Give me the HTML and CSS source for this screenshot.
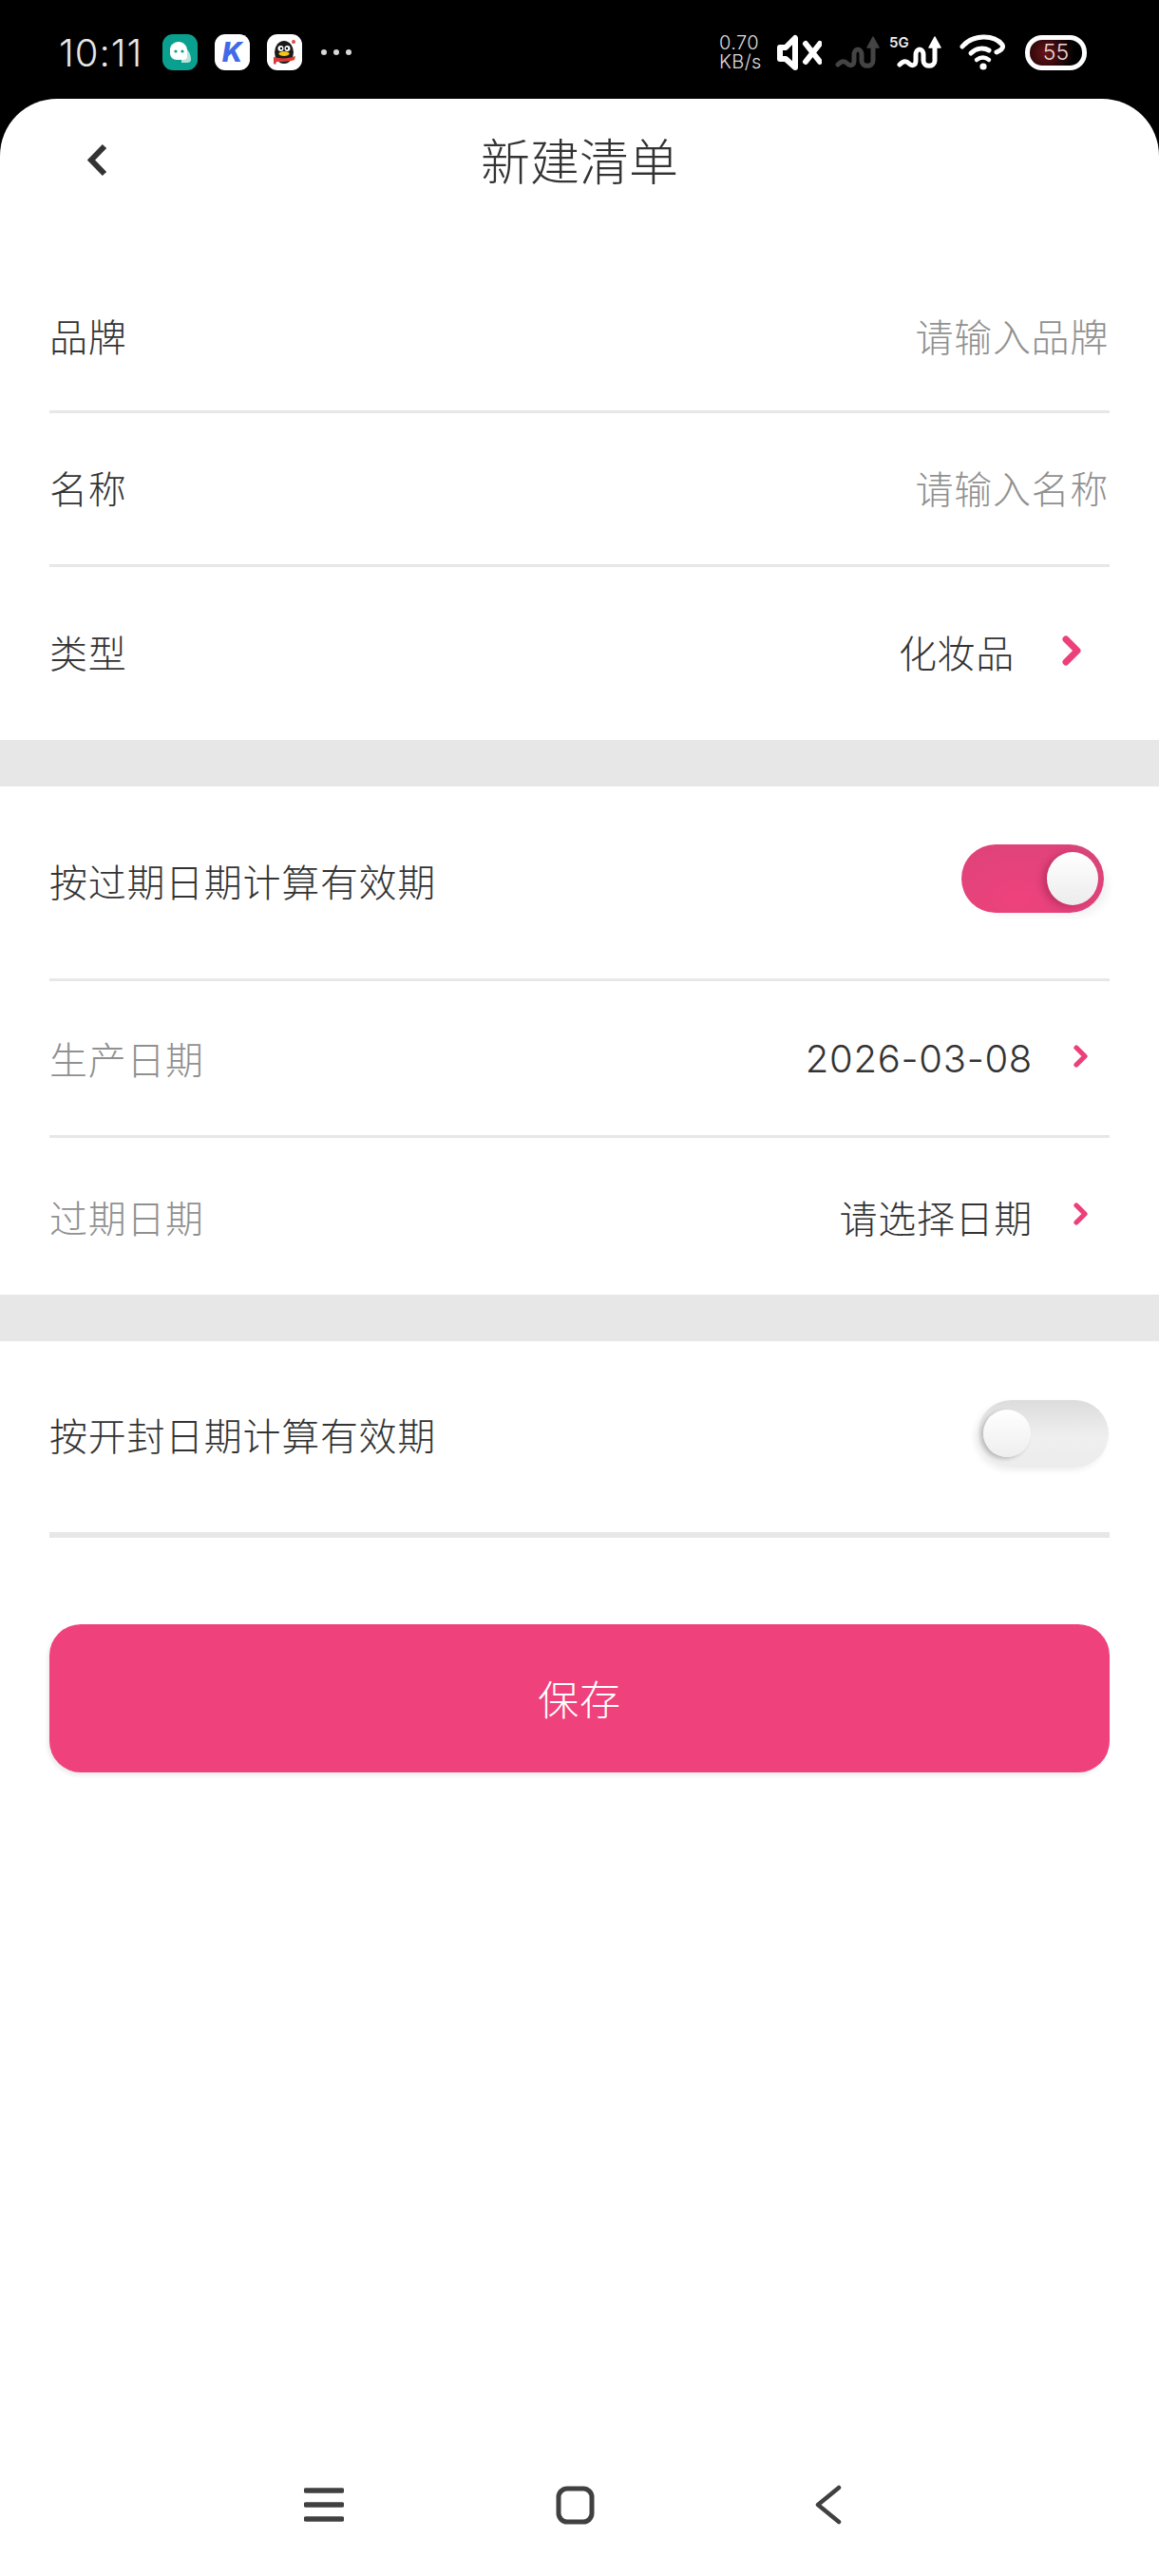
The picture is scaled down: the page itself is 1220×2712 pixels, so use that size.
FILE: index.html
```html
<!DOCTYPE HTML>
<html>
<head>
  <meta charset="UTF-8">
  <title>新建清单</title>
  <meta name="viewport" content="width=device-width, initial-scale=1">
  <link rel="stylesheet" href="styles.css">
</head>
<body>
  <svg class="defs" width="0" height="0">
    <symbol id="signal" viewBox="0 0 47 35">
      <path d="M3 30C7 26 10 26 13 29C16 32 20 31 20 26V20C20 12 28 12 28 20V26C28 33 40 33 40 26V10" fill="none" stroke="currentColor" stroke-width="5" stroke-linecap="round"/>
      <path d="M40 1L46 12H34Z" fill="currentColor" stroke="currentColor" stroke-width="1.5" stroke-linejoin="round"/>
    </symbol>
    <symbol id="arrow" viewBox="0 0 20 32">
      <path d="M4 4L16 16L4 28" fill="none" stroke="currentColor" stroke-width="7" stroke-linecap="round" stroke-linejoin="round"/>
    </symbol>
  </svg>

  <div class="statusbar">
    <span class="time">10:11</span>
    <div class="notify">
      <svg class="app" width="37" height="38" viewBox="0 0 37 38">
        <rect width="37" height="38" rx="11" fill="#0aa08f"/>
        <path d="M20 13C26 14 30 20 30 27C30 29 28 30 26 30H20Z" fill="#b5e3dc"/>
        <path d="M8 16C8 11 13 8 17 8C22 8 26 12 26 17V24C26 26 24 27 22 27H15C11 27 8 24 8 20Z" fill="#fff"/>
        <circle cx="14" cy="18" r="1.6" fill="#0aa08f"/>
        <circle cx="21" cy="18" r="1.6" fill="#0aa08f"/>
      </svg>
      <span class="app app-k">K</span>
      <svg class="app" width="37" height="38" viewBox="0 0 37 38">
        <rect width="37" height="38" rx="11" fill="#fff"/>
        <ellipse cx="18" cy="19" rx="10" ry="12" fill="#1a1a1a"/>
        <circle cx="14.5" cy="15" r="3" fill="#fff"/>
        <circle cx="21.5" cy="15" r="3" fill="#fff"/>
        <circle cx="15" cy="15" r="1.2" fill="#111"/>
        <circle cx="21" cy="15" r="1.2" fill="#111"/>
        <ellipse cx="18" cy="20.5" rx="5.5" ry="2.6" fill="#f5c518"/>
        <path d="M7 24C14 26 23 26 30 23L29 27C23 29 15 29 10 29L9 32L7 31Z" fill="#dd3a35"/>
        <circle cx="28" cy="8" r="2" fill="#e2483f"/>
      </svg>
      <div class="dots"><i></i><i></i><i></i></div>
    </div>
    <div class="sys">
      <div class="speed"><span>0.70</span><span>KB/s</span></div>
      <svg class="mute" width="47" height="39" viewBox="0 0 47 39">
        <path d="M3 14H9L19 4V35L9 26H3Z" fill="none" stroke="#fff" stroke-width="6" stroke-linejoin="round"/>
        <path d="M30 10L45 29M45 10L30 29" stroke="#fff" stroke-width="6" stroke-linecap="round"/>
      </svg>
      <svg class="signal signal-off" width="47" height="35"><use href="#signal"/></svg>
      <span class="net">5G</span>
      <svg class="signal signal-on" width="47" height="35"><use href="#signal"/></svg>
      <svg class="wifi" width="49" height="38" viewBox="0 0 49 38">
        <path d="M3 13C14 0 36 0 45 11C47 15 43 17 39 19" fill="none" stroke="#fff" stroke-width="5" stroke-linecap="round"/>
        <path d="M12 20C18 14 26 14 31 17" fill="none" stroke="#fff" stroke-width="5" stroke-linecap="round"/>
        <path d="M18 27C22 24 27 24 31 27" fill="none" stroke="#fff" stroke-width="4.5" stroke-linecap="round"/>
        <circle cx="25" cy="34" r="3.6" fill="#fff"/>
      </svg>
      <div class="battery"><span>55</span></div>
    </div>
  </div>

  <div class="sheet">
    <div class="topbar">
      <svg class="back" width="21" height="35" viewBox="0 0 21 35">
        <path d="M18 3L4 17.5L18 32" fill="none" stroke="#333" stroke-width="6"/>
      </svg>
      <h1>新建清单</h1>
    </div>

    <div class="group group-first">
      <div class="row row-brand">
        <span>品牌</span>
        <span class="hint">请输入品牌</span>
      </div>
      <div class="row row-name">
        <span>名称</span>
        <span class="hint">请输入名称</span>
      </div>
      <div class="row row-type">
        <span>类型</span>
        <div class="pick">
          <span>化妆品</span>
          <svg class="go go-big" width="20" height="32"><use href="#arrow"/></svg>
        </div>
      </div>
    </div>

    <div class="group">
      <div class="row row-switch">
        <span>按过期日期计算有效期</span>
        <div class="switch on"><i></i></div>
      </div>
      <div class="row row-date">
        <span class="muted">生产日期</span>
        <div class="pick">
          <span class="date">2026-03-08</span>
          <svg class="go" width="15" height="24"><use href="#arrow"/></svg>
        </div>
      </div>
      <div class="row row-date row-last">
        <span class="muted">过期日期</span>
        <div class="pick">
          <span>请选择日期</span>
          <svg class="go" width="15" height="24"><use href="#arrow"/></svg>
        </div>
      </div>
    </div>

    <div class="group group-end">
      <div class="row row-switch row-thick">
        <span>按开封日期计算有效期</span>
        <div class="switch off"><i></i></div>
      </div>
    </div>

    <div class="save">保存</div>

    <div class="navbar">
      <svg width="42" height="36" viewBox="0 0 42 36">
        <path d="M2 3H40M2 18H40M2 33H40" stroke="#404040" stroke-width="5.5" stroke-linecap="round"/>
      </svg>
      <svg width="41" height="41" viewBox="0 0 41 41">
        <rect x="3" y="3" width="35" height="35" rx="9" fill="none" stroke="#404040" stroke-width="5"/>
      </svg>
      <svg width="30" height="42" viewBox="0 0 30 42">
        <path d="M27 3L5 21L27 39" fill="none" stroke="#404040" stroke-width="4.5" stroke-linecap="round" stroke-linejoin="round"/>
      </svg>
    </div>
  </div>
</body>
</html>
```

FILE: styles.css
```css
* { box-sizing: border-box; }
html, body { margin: 0; padding: 0; }
body {
  width: 1220px;
  height: 2712px;
  background: #000;
  color: #333;
  font-family: "Noto Sans CJK SC", "Noto Sans", sans-serif;
  font-weight: 300;
  font-size: 40px;
  letter-spacing: 0.7px;
  display: flex;
  flex-direction: column;
  overflow: hidden;
}
.defs { display: block; height: 0; }

/* status bar */
.statusbar {
  height: 104px;
  flex: none;
  display: flex;
  align-items: center;
  padding: 6px 0 0 62px;
  color: #e6e6e6;
}
.time { font-family: Inter, sans-serif; font-weight: 300; font-size: 40px; width: 109px; letter-spacing: 1px; }
.notify { display: flex; align-items: center; gap: 18px; }
.app { display: block; flex: none; }
.app-k {
  width: 37px;
  height: 38px;
  border-radius: 11px;
  background: #fff;
  color: #4169e8;
  font-family: Inter, sans-serif;
  font-style: italic;
  font-weight: 800;
  font-size: 29px;
  line-height: 38px;
  letter-spacing: 0;
  text-align: center;
}
.dots { display: flex; gap: 7px; margin-left: 2px; }
.dots i { width: 6px; height: 6px; border-radius: 50%; background: #d8d8d8; }
.sys { display: flex; align-items: center; margin-left: 387px; }
.speed { display: flex; flex-direction: column; width: 61px; font-family: Inter, sans-serif; font-weight: 300; font-size: 20px; line-height: 20px; letter-spacing: 0.4px; color: #ddd; }
.mute { flex: none; }
.signal { flex: none; display: block; }
.signal-off { color: #444; margin-left: 14px; }
.signal-on { color: #fff; margin-left: 0; }
.net { font-family: Inter, sans-serif; font-weight: 600; font-size: 15px; letter-spacing: 0; color: #eee; width: 24px; margin-left: 10px; margin-right: -16px; align-self: flex-start; }
.wifi { flex: none; margin-left: 19px; }
.battery {
  width: 65px;
  height: 37px;
  margin-left: 20px;
  border: 5px solid #fff;
  border-radius: 18px;
  background: radial-gradient(circle at 30% 50%, #6a1418 0, #2a0709 45%, #000 75%);
  text-align: center;
  font-family: Inter, sans-serif;
  font-weight: 300;
  font-size: 23px;
  line-height: 27px;
  letter-spacing: 0;
  color: #e6dada;
}

/* white sheet */
.sheet {
  flex: 1;
  background: #fff;
  border-radius: 60px 60px 0 0;
  display: flex;
  flex-direction: column;
}
.topbar {
  height: 130px;
  flex: none;
  display: flex;
  align-items: center;
  justify-content: center;
  padding-bottom: 3px;
  position: relative;
}
.topbar h1 { margin: 0; font-size: 52px; font-weight: 300; color: #333; letter-spacing: 0; }
.back { position: absolute; left: 92px; top: 47px; }

.group { background: #fff; padding: 0 52px; border-bottom: 49px solid #e7e7e7; }
.group-first { padding-top: 44px; }
.group-end { border-bottom: 0; }
.row {
  display: flex;
  align-items: center;
  justify-content: space-between;
  border-bottom: 3px solid #e7e7e7;
}
.row-brand { height: 157px; padding-bottom: 5px; }
.row-name { height: 162px; padding-bottom: 3px; }
.row-type { height: 182px; padding-bottom: 5px; border-bottom: 0; }
.row-switch { height: 205px; padding-bottom: 5px; }
.row-date { height: 165px; }
.row-last { border-bottom: 0; }
.row-thick { height: 207px; border-bottom-width: 6px; }
.hint { color: #909090; margin-right: 1px; }
.muted { color: #909090; }
.pick { display: flex; align-items: center; }
.date { font-family: Inter, sans-serif; font-weight: 300; font-size: 40px; letter-spacing: 0.7px; }
.go { display: block; color: #ec407a; margin: -5px 23px 0 43px; }
.go-big { margin: -1px 30px 0 50px; }

/* switches */
.switch { position: relative; border-radius: 40px; flex: none; }
.switch i { position: absolute; border-radius: 50%; }
.switch.on {
  width: 150px;
  height: 72px;
  margin: 0 6px 3px 0;
  background: radial-gradient(ellipse at 40% 80%, #ef427d 0, #de4379 75%, #cf4878 100%);
  box-shadow: 10px 8px 10px -6px rgba(0, 0, 0, 0.06);
}
.switch.on i {
  width: 54px;
  height: 56px;
  left: 90px;
  top: 8px;
  background: linear-gradient(#fff, #ececec);
  box-shadow: -5px 2px 7px rgba(120, 20, 60, 0.35);
}
.switch.off {
  width: 138px;
  height: 71px;
  margin: 0 1px 2px 0;
  background: linear-gradient(#dcdcdc, #efefef 55%, #ececec);
  box-shadow: -3px 3px 6px rgba(0, 0, 0, 0.07);
}
.switch.off i {
  width: 50px;
  height: 50px;
  left: 6px;
  top: 10px;
  background: linear-gradient(#fff, #eee);
  box-shadow: -3px 2px 4px rgba(0, 0, 0, 0.22);
}

.save {
  height: 156px;
  flex: none;
  margin: 91px 52px 0;
  padding-bottom: 3px;
  border-radius: 33px;
  background: #ef417b;
  box-shadow: -2px 3px 4px rgba(0, 0, 0, 0.08);
  color: #fff;
  font-size: 43px;
  display: flex;
  align-items: center;
  justify-content: center;
}

/* bottom buttons */
.navbar {
  margin-top: auto;
  height: 150px;
  flex: none;
  display: flex;
  align-items: center;
  padding-left: 320px;
  gap: 223px;
}
.navbar svg:last-child { margin-left: 7px; }
```
